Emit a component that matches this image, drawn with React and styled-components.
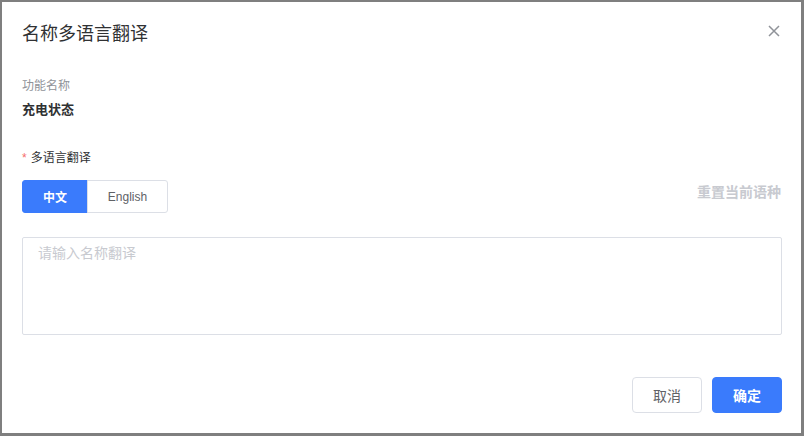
import React, { useState } from "react";
import styled, { createGlobalStyle } from "styled-components";

const GlobalStyle = createGlobalStyle`
  html, body {
    margin: 0;
    padding: 0;
    background: #7f7f7f;
  }
  body {
    font-family: "Liberation Sans", "Noto Sans CJK SC", sans-serif;
  }
  * { box-sizing: border-box; }
`;

const Frame = styled.div`
  width: 804px;
  height: 436px;
  padding: 2px 3px 3px 2px;
`;

const Dialog = styled.div`
  width: 799px;
  height: 431px;
  background: #fff;
  display: flex;
  flex-direction: column;
  padding: 0 20px;
`;

const Header = styled.div`
  display: flex;
  align-items: center;
  justify-content: space-between;
  height: 64px;
`;

const Title = styled.h2`
  margin: 0;
  font-size: 18px;
  font-weight: 400;
  color: #303133;
  line-height: 24px;
`;

const CloseBtn = styled.button`
  border: none;
  background: none;
  padding: 0;
  width: 16px;
  height: 16px;
  display: flex;
  align-items: center;
  justify-content: center;
  color: #909399;
  margin-right: -1px;
  margin-top: -6px;
  cursor: pointer;
`;

const Field = styled.div`
  margin-top: ${(p) => p.$top || 0}px;
`;

const Label = styled.div`
  font-size: 12px;
  line-height: 16px;
  color: ${(p) => (p.$dark ? "#303133" : "#909399")};
  span {
    color: #f56c6c;
    margin-right: 4px;
  }
`;

const Value = styled.div`
  margin-top: 7px;
  font-size: 13px;
  font-weight: 700;
  line-height: 18px;
  color: #303133;
`;

const TabRow = styled.div`
  margin-top: 14px;
  display: flex;
  align-items: center;
  justify-content: space-between;
`;

const Tabs = styled.div`
  display: flex;
`;

const Tab = styled.button`
  height: 33px;
  padding: 0;
  width: ${(p) => p.$w}px;
  font-family: inherit;
  font-size: 12px;
  cursor: pointer;
  border: 1px solid ${(p) => (p.$active ? "#3a7bfc" : "#dcdfe6")};
  background: ${(p) => (p.$active ? "#3a7bfc" : "#fff")};
  color: ${(p) => (p.$active ? "#fff" : "#606266")};
  font-weight: ${(p) => (p.$active ? 700 : 400)};
  border-radius: ${(p) => (p.$first ? "3px 0 0 3px" : "0 3px 3px 0")};
  margin-left: ${(p) => (p.$first ? 0 : -1)}px;
`;

const ResetLink = styled.button`
  border: none;
  background: none;
  padding: 0;
  font-family: inherit;
  font-size: 14px;
  font-weight: 700;
  color: #c8cad0;
  margin-top: -12px;
  cursor: pointer;
`;

const TextArea = styled.textarea`
  display: block;
  margin-top: 24px;
  width: 760px;
  height: 98px;
  resize: none;
  border: 1px solid #dcdfe6;
  border-radius: 2px;
  padding: 4px 15px;
  font-family: inherit;
  font-size: 14px;
  line-height: 22px;
  color: #606266;
  outline: none;
  &::placeholder {
    color: #c8cad0;
  }
`;

const Footer = styled.div`
  margin-top: auto;
  margin-bottom: 20px;
  margin-right: -1px;
  display: flex;
  justify-content: flex-end;
  gap: 10px;
`;

const Button = styled.button`
  width: 70px;
  height: 36px;
  border-radius: 4px;
  font-family: inherit;
  font-size: 14px;
  cursor: pointer;
  border: 1px solid ${(p) => (p.$primary ? "#3a7bfc" : "#dcdfe6")};
  background: ${(p) => (p.$primary ? "#3a7bfc" : "#fff")};
  color: ${(p) => (p.$primary ? "#fff" : "#606266")};
  font-weight: ${(p) => (p.$primary ? 700 : 400)};
`;

export default function App() {
  const [lang, setLang] = useState("zh");
  return (
    <>
      <GlobalStyle />
      <Frame>
        <Dialog>
          <Header>
            <Title>名称多语言翻译</Title>
            <CloseBtn aria-label="close">
              <svg width="12" height="12" viewBox="0 0 12 12">
                <path d="M1 1L11 11M11 1L1 11" stroke="currentColor" strokeWidth="1.5" />
              </svg>
            </CloseBtn>
          </Header>
          <Field $top={12}>
            <Label>功能名称</Label>
            <Value>充电状态</Value>
          </Field>
          <Field $top={31}>
            <Label $dark>
              <span>*</span>多语言翻译
            </Label>
            <TabRow>
              <Tabs>
                <Tab $first $w={66} $active={lang === "zh"} onClick={() => setLang("zh")}>
                  中文
                </Tab>
                <Tab $w={81} $active={lang === "en"} onClick={() => setLang("en")}>
                  English
                </Tab>
              </Tabs>
              <ResetLink>重置当前语种</ResetLink>
            </TabRow>
            <TextArea placeholder="请输入名称翻译" />
          </Field>
          <Footer>
            <Button>取消</Button>
            <Button $primary>确定</Button>
          </Footer>
        </Dialog>
      </Frame>
    </>
  );
}
